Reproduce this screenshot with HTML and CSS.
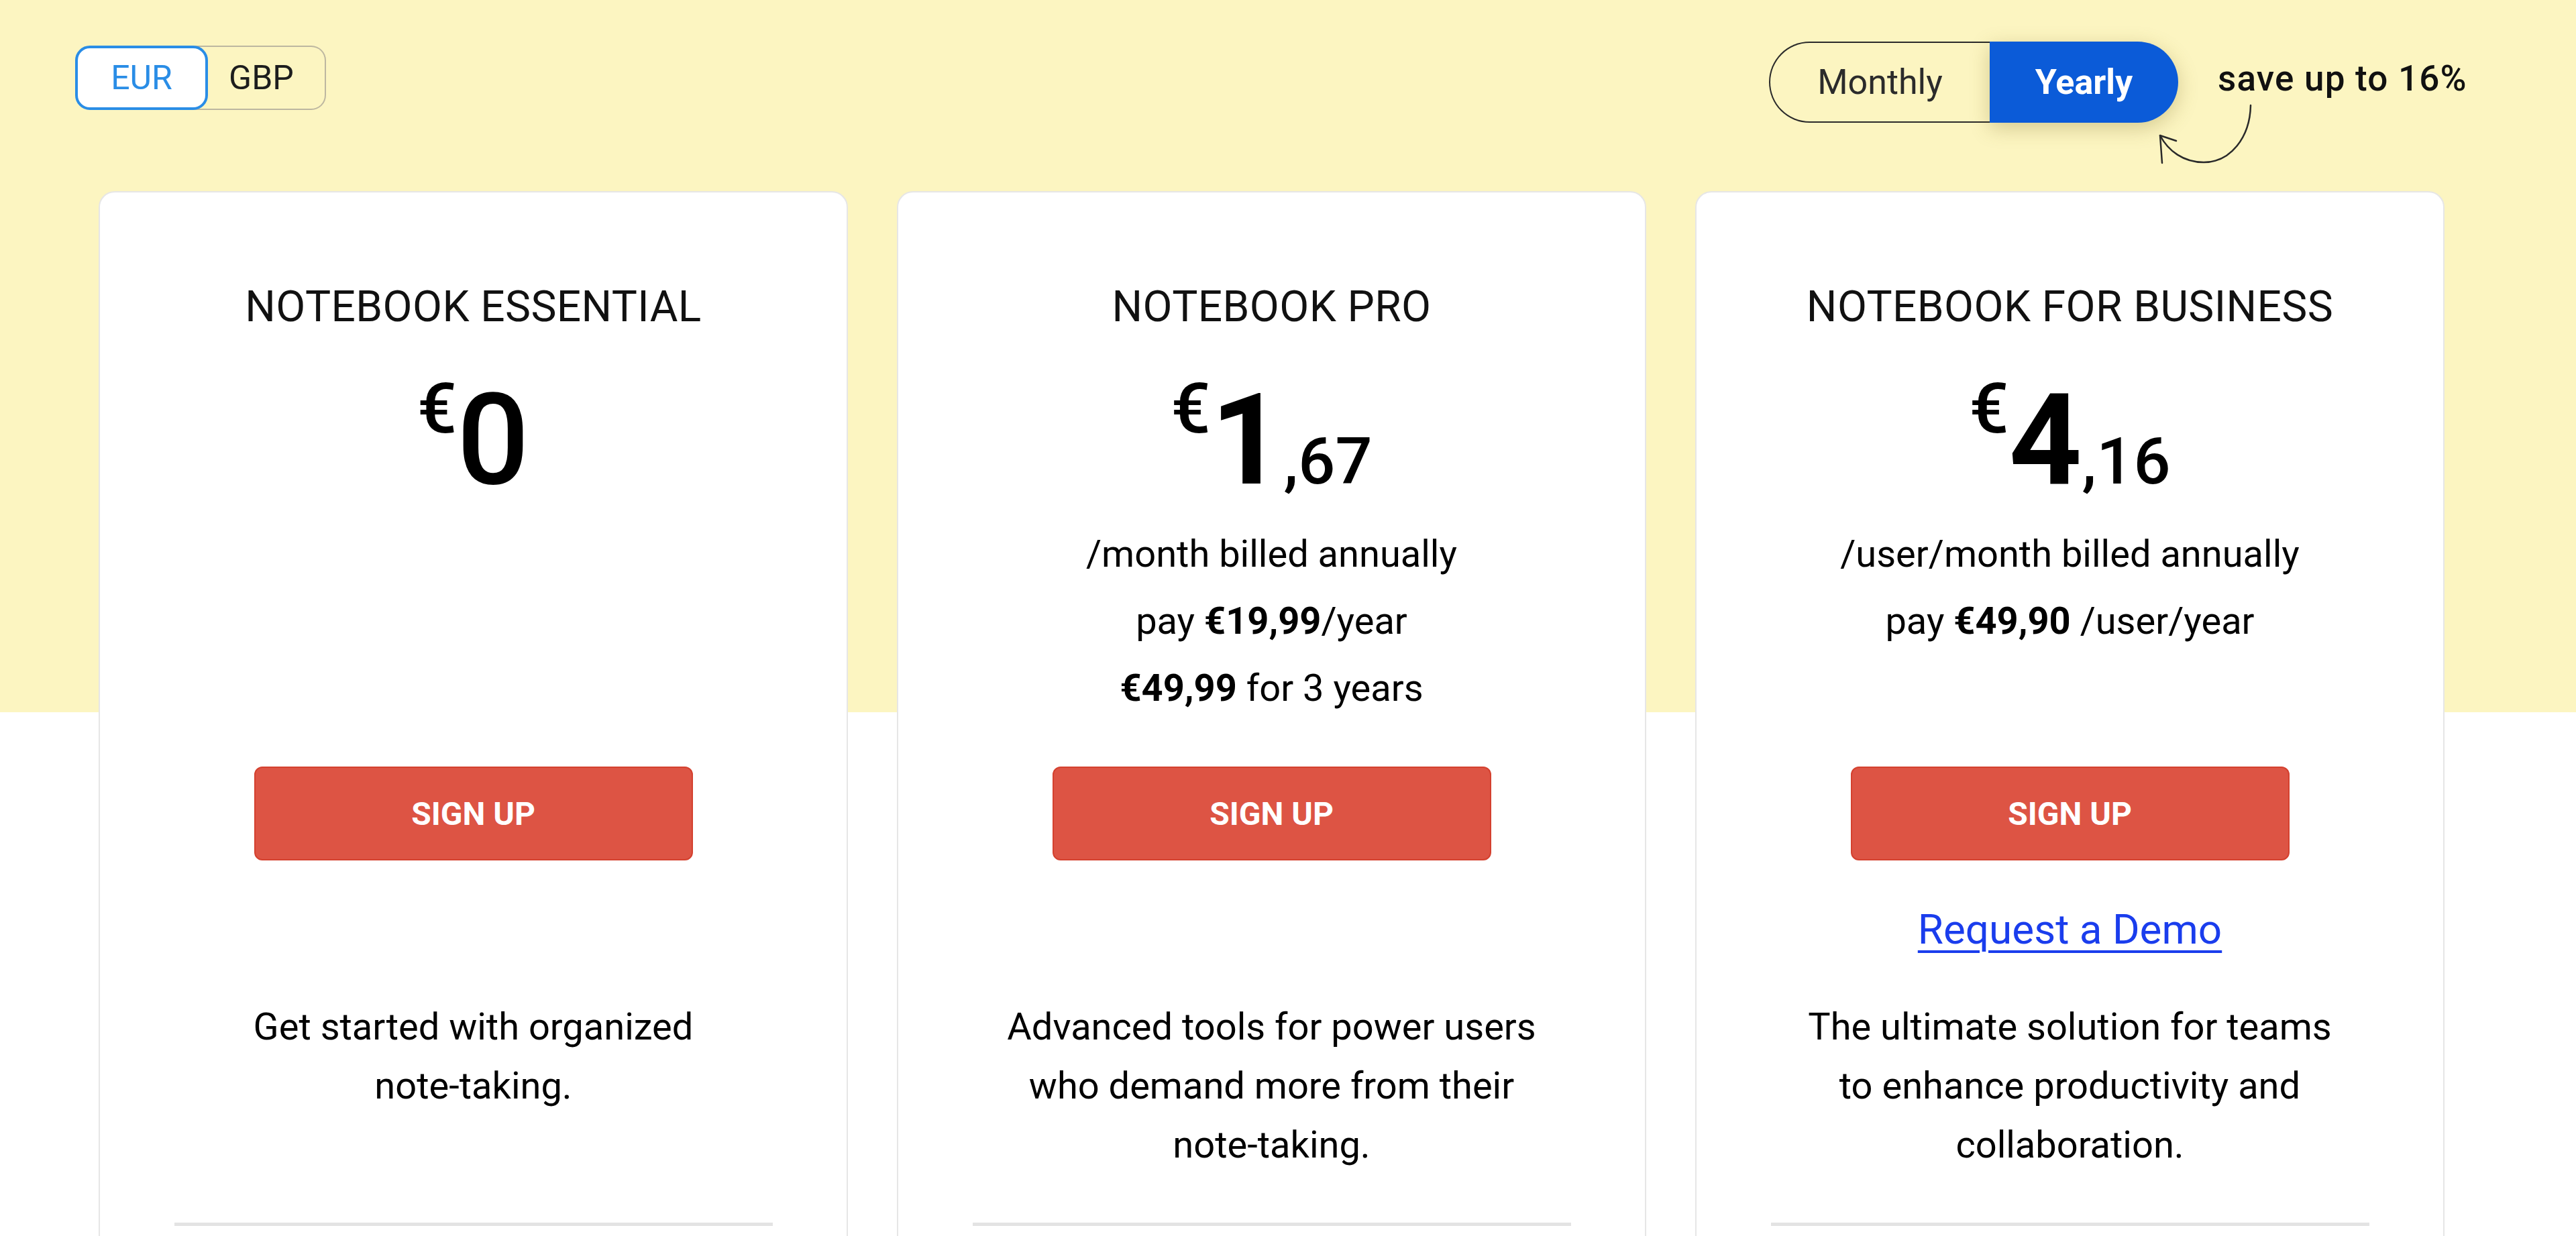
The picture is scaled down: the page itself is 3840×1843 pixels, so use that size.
FILE: index.html
```html
<!DOCTYPE html>
<html lang="en">
<head>
<meta charset="utf-8">
<title>Notebook Pricing</title>
<link rel="stylesheet" href="styles.css">
</head>
<body>
<div class="page">
  <header class="topbar">
    <div class="currency">
      <button class="cur-btn eur">EUR</button>
      <button class="cur-btn gbp">GBP</button>
    </div>
    <div class="billing">
      <div class="period">
        <span class="period-opt monthly">Monthly</span>
        <span class="period-opt yearly">Yearly</span>
      </div>
      <span class="save">save up to 16%</span>
      <svg class="save-arrow" width="180" height="110" viewBox="0 0 180 110" aria-hidden="true">
        <path d="M155 7 C154 55 125 92 85 92 C55 92 32 75 20 52" fill="none" stroke="#2a2a2a" stroke-width="2.5" stroke-linecap="round"/>
        <path d="M20 52 L23 93 M20 52 L44 60" fill="none" stroke="#2a2a2a" stroke-width="2.5" stroke-linecap="round"/>
      </svg>
    </div>
  </header>

  <main class="plans">
    <section class="plan">
      <h2 class="plan-name">NOTEBOOK ESSENTIAL</h2>
      <div class="pricing">
        <div class="price"><span class="cur">€</span><span class="amount regular">0</span></div>
      </div>
      <div class="cta">
        <a class="signup" href="#">SIGN UP</a>
      </div>
      <p class="desc">Get started with organized <span class="nobr">note-taking.</span></p>
      <hr class="sep">
    </section>

    <section class="plan">
      <h2 class="plan-name">NOTEBOOK PRO</h2>
      <div class="pricing">
        <div class="price"><span class="cur">€</span><span class="amount">1</span><span class="dec">,67</span></div>
        <div class="terms">
          <p>/month billed annually</p>
          <p>pay <b>€19,99</b>/year</p>
          <p><b>€49,99</b> for 3 years</p>
        </div>
      </div>
      <div class="cta">
        <a class="signup" href="#">SIGN UP</a>
      </div>
      <p class="desc">Advanced tools for power users who demand more from their <span class="nobr">note-taking.</span></p>
      <hr class="sep">
    </section>

    <section class="plan">
      <h2 class="plan-name">NOTEBOOK FOR BUSINESS</h2>
      <div class="pricing">
        <div class="price"><span class="cur">€</span><span class="amount">4</span><span class="dec">,16</span></div>
        <div class="terms">
          <p>/user/month billed annually</p>
          <p>pay <b>€49,90</b> /user/year</p>
        </div>
      </div>
      <div class="cta">
        <a class="signup" href="#">SIGN UP</a>
        <a class="demo" href="#">Request a Demo</a>
      </div>
      <p class="desc">The ultimate solution for teams to enhance productivity and collaboration.</p>
      <hr class="sep">
    </section>
  </main>
</div>
</body>
</html>
```

FILE: styles.css
```css
html, body {
  margin: 0;
  padding: 0;
}

body {
  font-family: Roboto, "Noto Sans", "Liberation Sans", Arial, sans-serif;
  color: #111;
}

.page {
  height: 1843px;
  overflow: hidden;
  background: linear-gradient(to bottom, #fcf5c1 0, #fcf5c1 1062px, #ffffff 1062px);
}

/* ---------- top bar ---------- */
.topbar {
  display: flex;
  align-items: flex-start;
  height: 285px;
  box-sizing: border-box;
  padding: 62px 158px 0 112px;
}

.currency {
  display: flex;
  margin-top: 6px;
}

.cur-btn {
  font-family: Roboto, "Noto Sans", sans-serif;
  font-size: 50px;
  font-weight: 400;
  line-height: 1;
  height: 96px;
  box-sizing: border-box;
  display: flex;
  align-items: center;
  justify-content: center;
  padding: 0;
  margin: 0;
  cursor: pointer;
}

.cur-btn.eur {
  width: 198px;
  background: #ffffff;
  color: #2a8de6;
  border: 4px solid #2a8de6;
  border-radius: 22px;
  position: relative;
  z-index: 1;
}

.cur-btn.gbp {
  width: 200px;
  margin-left: -24px;
  padding-left: 24px;
  padding-right: 15px;
  background: transparent;
  color: #1d1d1d;
  border: 2px solid #bdb7a0;
  border-left: 0;
  border-radius: 0 22px 22px 0;
}

.billing {
  margin-left: auto;
  display: flex;
  align-items: flex-start;
  position: relative;
}

.period {
  display: flex;
  height: 121px;
}

.period-opt {
  display: flex;
  align-items: center;
  justify-content: center;
  box-sizing: border-box;
  font-size: 52px;
}

.monthly {
  width: 329px;
  border: 2px solid #2a2a2a;
  border-right: 0;
  border-radius: 61px 0 0 61px;
  color: #2b2b2b;
}

.yearly {
  width: 281px;
  background: #0b5bd8;
  color: #ffffff;
  font-weight: 700;
  border-radius: 0 61px 61px 0;
  box-shadow: 0 8px 30px rgba(110, 95, 20, 0.28);
}

.save {
  margin-left: 59px;
  margin-top: 23px;
  width: 376px;
  white-space: nowrap;
  font-size: 53px;
  line-height: 64px;
  font-weight: 500;
  letter-spacing: 1.2px;
  color: #111;
}

.save-arrow {
  position: absolute;
  left: 563px;
  top: 88px;
}

/* ---------- plans ---------- */
.plans {
  display: grid;
  grid-template-columns: repeat(3, 1117px);
  column-gap: 73px;
  padding-left: 147px;
  align-items: start;
}

.plan {
  background: #ffffff;
  border: 2px solid #e6e6e6;
  border-radius: 24px;
  height: 1700px;
  box-sizing: border-box;
  padding-top: 133px;
  display: flex;
  flex-direction: column;
  align-items: center;
}

.plan-name {
  margin: 0;
  font-size: 64px;
  line-height: 76px;
  font-weight: 400;
  letter-spacing: 0.4px;
  color: #111;
  white-space: nowrap;
}

.pricing {
  margin-top: 65px;
  height: 582px;
  text-align: center;
}

.price {
  font-size: 190px;
  line-height: 190px;
  font-weight: 700;
  color: #000;
  white-space: nowrap;
}

.price .cur {
  font-size: 104px;
  font-weight: 500;
  line-height: 0;
  vertical-align: 76px;
}

.price .amount.regular {
  font-weight: 500;
}

.price .dec {
  font-size: 97px;
  font-weight: 500;
  line-height: 0;
}

.terms {
  margin-top: 25px;
  font-size: 56px;
  line-height: 100px;
  color: #000;
}

.terms p {
  margin: 0;
  white-space: nowrap;
}

.terms b {
  font-weight: 700;
}

.cta {
  height: 344px;
  display: flex;
  flex-direction: column;
  align-items: center;
}

.signup {
  width: 654px;
  height: 140px;
  box-sizing: border-box;
  background: #dd5444;
  border: 2px solid #d4412f;
  border-radius: 12px;
  color: #ffffff;
  font-size: 48px;
  font-weight: 700;
  display: flex;
  align-items: center;
  justify-content: center;
  text-decoration: none;
}

.demo {
  margin-top: 63px;
  font-size: 62px;
  line-height: 80px;
  color: #1a3ded;
  text-decoration: underline;
  text-decoration-thickness: 4px;
  text-underline-offset: 10px;
}

.desc {
  margin: 0;
  height: 336px;
  max-width: 810px;
  text-align: center;
  font-size: 56px;
  line-height: 88px;
  color: #000;
}

.nobr {
  white-space: nowrap;
}

.sep {
  margin: 0;
  width: 892px;
  height: 5px;
  border: 0;
  background: #e3e3e3;
}
```
